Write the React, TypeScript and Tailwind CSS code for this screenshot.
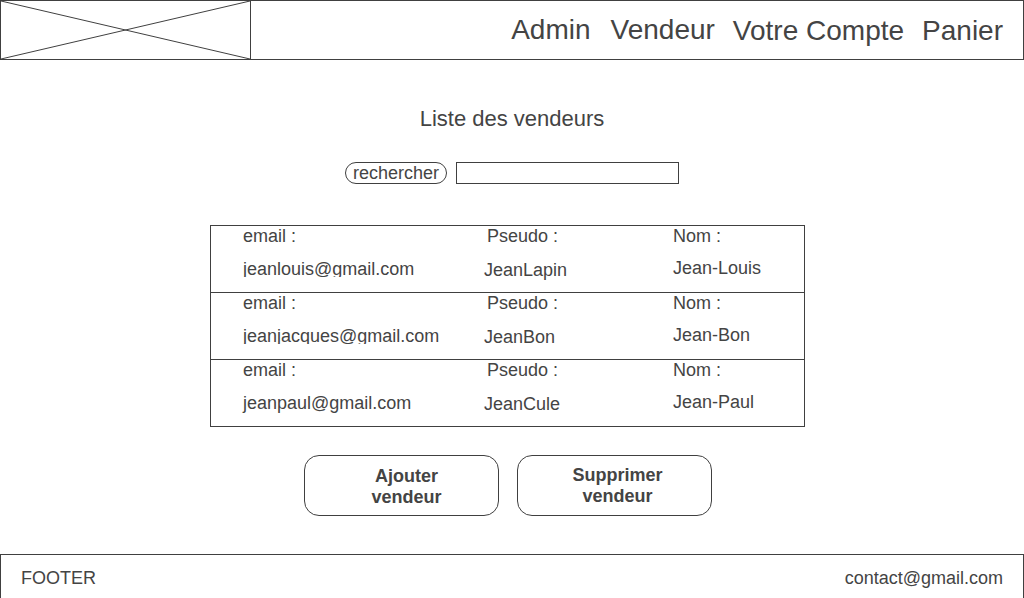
import React from "react";

const sellers = [
  { email: "jeanlouis@gmail.com", pseudo: "JeanLapin", nom: "Jean-Louis", clip: true },
  { email: "jeanjacques@gmail.com", pseudo: "JeanBon", nom: "Jean-Bon", clip: true },
  { email: "jeanpaul@gmail.com", pseudo: "JeanCule", nom: "Jean-Paul", clip: false },
];

export default function App() {
  return (
    <div className="flex min-h-screen flex-col bg-white font-['Liberation_Sans',Arial,sans-serif] text-lg leading-5 text-[#444444]">
      <header className="flex h-[60px] items-stretch justify-between border border-[#404040] pr-5">
        <a href="#accueil" aria-label="Accueil" className="flex w-[250px] border-r border-[#404040]">
          <svg viewBox="0 0 249 58" preserveAspectRatio="none" className="h-full w-full" fill="none" stroke="#404040">
            <path d="M0 0l249 58M0 58l249-58" />
          </svg>
        </a>
        <nav className="flex items-center gap-[18px] text-[28px] leading-8">
          <div className="flex gap-5 pb-px">
            <a href="#admin">Admin</a>
            <a href="#vendeur">Vendeur</a>
          </div>
          <div className="flex gap-[18px] pt-px">
            <a href="#compte">Votre Compte</a>
            <a href="#panier">Panier</a>
          </div>
        </nav>
      </header>

      <main className="flex flex-1 flex-col items-center pb-[38px]">
        <h1 className="mt-[47px] text-[22px] leading-6">Liste des vendeurs</h1>
        <form className="mt-[31px] flex gap-[9px]" onSubmit={(e) => e.preventDefault()}>
          <button type="submit" className="h-[22px] w-[102px] rounded-[11px] border border-[#404040]">
            rechercher
          </button>
          <input type="search" aria-label="rechercher" className="h-[22px] w-[223px] border border-[#404040] px-1 outline-none" />
        </form>

        <ul className="mr-[9px] mt-[41px] w-[595px] divide-y divide-[#404040] border border-[#404040]">
          {sellers.map((s) => (
            <li key={s.email} className="grid grid-cols-[241px_189px_1fr] pb-3 pl-8">
              <dl>
                <dt>email :</dt>
                <dd className={s.clip ? "mt-[13px] h-[18px] overflow-hidden" : "mt-[13px]"}>{s.email}</dd>
              </dl>
              <dl>
                <dt className="pl-[3px]">Pseudo :</dt>
                <dd className="mt-[14px]">{s.pseudo}</dd>
              </dl>
              <dl>
                <dt>Nom :</dt>
                <dd className="mt-3">{s.nom}</dd>
              </dl>
            </li>
          ))}
        </ul>

        <div className="mr-2 mt-7 flex gap-[18px] font-bold leading-[21px]">
          <button type="button" className="h-[61px] w-[195px] rounded-[15px] border border-[#404040] pl-[10px] pt-[2px]">
            Ajouter<br />vendeur
          </button>
          <button type="button" className="h-[61px] w-[195px] rounded-[15px] border border-[#404040] pl-[6px]">
            Supprimer<br />vendeur
          </button>
        </div>
      </main>

      <footer className="flex h-11 items-center justify-between border border-b-0 border-[#404040] px-5 pt-[2px]">
        <span>FOOTER</span>
        <a href="mailto:contact@gmail.com">contact@gmail.com</a>
      </footer>
    </div>
  );
}
